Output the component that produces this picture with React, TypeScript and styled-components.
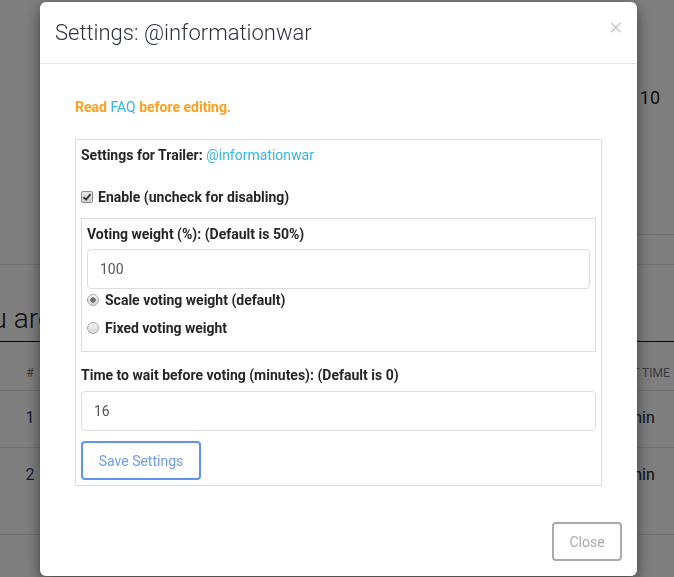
import React from 'react';
import styled, { createGlobalStyle } from 'styled-components';

const GlobalStyle = createGlobalStyle`
  html, body {
    margin: 0;
    padding: 0;
    height: 100%;
    overflow: hidden;
  }
  body {
    font-family: Roboto, "Liberation Sans", Arial, sans-serif;
    color: #333;
    background: #fff;
  }
  * {
    box-sizing: border-box;
  }
`;

/* ---------- page behind the dialog ---------- */

const Page = styled.div`
  width: 674px;
  height: 577px;
  overflow: hidden;
  background: #fff;
`;

const TopArea = styled.div`
  display: flex;
  justify-content: flex-end;
  height: 235px;
`;

const StatCard = styled.div`
  width: 140px;
  height: 235px;
  padding: 88px 14px 0 0;
  border-bottom: 1px solid #dee2e6;
  display: flex;
  justify-content: flex-end;
  align-items: flex-start;
  gap: 4px;
  font-size: 18px;
  line-height: 20px;
  color: #222;
`;

const StatDot = styled.i`
  width: 6px;
  height: 6px;
  margin-top: 7px;
  border-radius: 50%;
  background: #1565c0;
`;

const Section = styled.section`
  margin-top: 29px;
  border-top: 1px solid #dee2e6;
`;

const SectionTitle = styled.h2`
  margin: 37px 0 5px -40px;
  font-size: 28px;
  line-height: 34px;
  font-weight: 300;
  color: #222;
  white-space: nowrap;
`;

const Table = styled.table`
  width: 674px;
  border-collapse: collapse;
  table-layout: fixed;
  border-top: 1px solid #111;
`;

const Th = styled.th<{ $w?: number; $align?: string; $pl?: number }>`
  width: ${({ $w }) => ($w ? `${$w}px` : 'auto')};
  padding: 24px 12px 10px ${({ $pl }) => $pl ?? 12}px;
  font-size: 12px;
  line-height: 14px;
  font-weight: 400;
  text-transform: uppercase;
  color: #777;
  text-align: ${({ $align }) => $align || 'left'};
  white-space: nowrap;
`;

const Tr = styled.tr`
  border-top: 1px solid #dee2e6;
  border-bottom: 1px solid #dee2e6;
`;

const Td = styled.td<{ $align?: string; $tall?: boolean }>`
  padding: 17px 12px ${({ $tall }) => ($tall ? '49px' : '19px')};
  font-size: 16px;
  line-height: 20px;
  vertical-align: top;
  text-align: ${({ $align }) => $align || 'left'};
  color: #222;
  white-space: nowrap;
`;

const RowLink = styled.span`
  color: #283a7a;
`;

/* ---------- dialog ---------- */

const Backdrop = styled.div`
  position: fixed;
  inset: 0;
  background: rgba(0, 0, 0, 0.5);
  padding: 2px 0 0 40px;
`;

const Dialog = styled.div`
  width: 597px;
  height: 574px;
  background: #fff;
  border-radius: 6px;
  box-shadow: 0 5px 15px rgba(0, 0, 0, 0.5);
  display: flex;
  flex-direction: column;
`;

const Header = styled.div`
  display: flex;
  justify-content: space-between;
  align-items: flex-start;
  padding: 15px;
  border-bottom: 1px solid #e5e5e5;
`;

const Title = styled.h4`
  margin: 0;
  font-size: 22px;
  line-height: 31px;
  font-weight: 300;
  color: #2f3340;
`;

const CloseX = styled.button`
  border: 0;
  background: none;
  padding: 0;
  margin: 0;
  font-family: Roboto, sans-serif;
  font-size: 24px;
  font-weight: 300;
  line-height: 18px;
  color: #c6c6c6;
`;

const Body = styled.div`
  flex: 1;
  padding: 33px 35px 20px;
`;

const Notice = styled.p`
  margin: 0 0 22px;
  font-size: 14px;
  line-height: 20px;
  font-weight: 700;
  color: #ff9f1c;
`;

const Link = styled.a`
  color: #35b5e5;
  font-weight: 400;
  text-decoration: none;
`;

const Panel = styled.div`
  border: 1px solid #ddd;
  padding: 5px;
`;

const Label = styled.div<{ $mt?: number }>`
  margin-top: ${({ $mt }) => $mt || 0}px;
  font-size: 14px;
  line-height: 20px;
  font-weight: 700;
  color: #262626;
`;

const CheckRow = styled.label`
  display: flex;
  align-items: center;
  gap: 5px;
  margin-top: 22px;
  font-size: 14px;
  line-height: 20px;
  font-weight: 700;
  color: #262626;
`;

const CheckBox = styled.span`
  width: 12px;
  height: 12px;
  border: 1px solid #8d8d8d;
  border-radius: 2px;
  background: linear-gradient(#e8e8e8, #cfcfcf);
  display: flex;
  align-items: center;
  justify-content: center;
`;

const InnerPanel = styled.div`
  margin-top: 11px;
  border: 1px solid #ddd;
  padding: 5px;
`;

const TextInput = styled.input<{ $mt?: number; $mb?: number }>`
  display: block;
  width: 100%;
  height: 40px;
  margin: ${({ $mt }) => $mt || 0}px 0 ${({ $mb }) => $mb || 0}px;
  padding: 0 12px;
  border: 1px solid #ddd;
  border-radius: 4px;
  font-family: Roboto, sans-serif;
  font-size: 14px;
  color: #555;
  outline: none;
`;

const RadioRow = styled.label`
  display: flex;
  align-items: center;
  gap: 6px;
  margin-bottom: 8px;
  font-size: 14px;
  line-height: 20px;
  font-weight: 700;
  color: #262626;
`;

const Radio = styled.input`
  appearance: none;
  width: 12px;
  height: 12px;
  margin: 0;
  border: 1px solid #a8a8a8;
  border-radius: 50%;
  background: linear-gradient(#f5f5f5, #d6d6d6);
  &:checked {
    background: radial-gradient(circle, #6e6e6e 0 2.5px, transparent 3px),
      linear-gradient(#f5f5f5, #d6d6d6);
  }
`;

const OutlineButton = styled.button<{ $tone: 'primary' | 'muted' }>`
  height: 39px;
  padding: 0;
  border: 2px solid ${({ $tone }) => ($tone === 'primary' ? '#6092ef' : '#ababab')};
  border-radius: 4px;
  background: #fff;
  font-family: Roboto, sans-serif;
  font-size: 14px;
  white-space: nowrap;
  color: ${({ $tone }) => ($tone === 'primary' ? '#6f9bef' : '#aaa')};
`;

const SaveButton = styled(OutlineButton)`
  display: block;
  margin-top: 10px;
  width: 120px;
`;

const Footer = styled.div`
  display: flex;
  justify-content: flex-end;
  padding: 15px;
`;

const CloseButton = styled(OutlineButton)`
  width: 70px;
`;

export default function App() {
  return (
    <>
      <GlobalStyle />
      <Page>
        <TopArea>
          <StatCard>
            <StatDot />
            <span>10</span>
          </StatCard>
        </TopArea>
        <Section>
          <SectionTitle>You are following</SectionTitle>
          <Table>
            <thead>
              <tr>
                <Th $w={60} $align="center">#</Th>
                <Th>Trailer</Th>
                <Th $w={80} $pl={17}>Wait time</Th>
              </tr>
            </thead>
            <tbody>
              <Tr>
                <Td $align="center"><RowLink>1</RowLink></Td>
                <Td>@informationwar</Td>
                <Td>16 min</Td>
              </Tr>
              <Tr>
                <Td $align="center" $tall><RowLink>2</RowLink></Td>
                <Td $tall>@trailer</Td>
                <Td $tall>20 min</Td>
              </Tr>
            </tbody>
          </Table>
        </Section>
      </Page>

      <Backdrop>
        <Dialog>
          <Header>
            <Title>Settings: @informationwar</Title>
            <CloseX aria-label="Close">×</CloseX>
          </Header>
          <Body>
            <Notice>
              Read <Link href="#">FAQ</Link> before editing.
            </Notice>
            <Panel>
              <Label>
                Settings for Trailer: <Link href="#">@informationwar</Link>
              </Label>
              <CheckRow>
                <CheckBox>
                  <svg width="10" height="10" viewBox="0 0 10 10">
                    <path d="M1.5 5.2 L4 7.6 L8.6 2.2" fill="none" stroke="#333" strokeWidth="1.8" />
                  </svg>
                </CheckBox>
                Enable (uncheck for disabling)
              </CheckRow>
              <InnerPanel>
                <Label>Voting weight (%): (Default is 50%)</Label>
                <TextInput $mt={5} $mb={1} defaultValue="100" />
                <RadioRow>
                  <Radio type="radio" name="mode" defaultChecked />
                  Scale voting weight (default)
                </RadioRow>
                <RadioRow>
                  <Radio type="radio" name="mode" />
                  Fixed voting weight
                </RadioRow>
              </InnerPanel>
              <Label $mt={13}>Time to wait before voting (minutes): (Default is 0)</Label>
              <TextInput $mt={6} defaultValue="16" />
              <SaveButton $tone="primary">Save Settings</SaveButton>
            </Panel>
          </Body>
          <Footer>
            <CloseButton $tone="muted">Close</CloseButton>
          </Footer>
        </Dialog>
      </Backdrop>
    </>
  );
}
